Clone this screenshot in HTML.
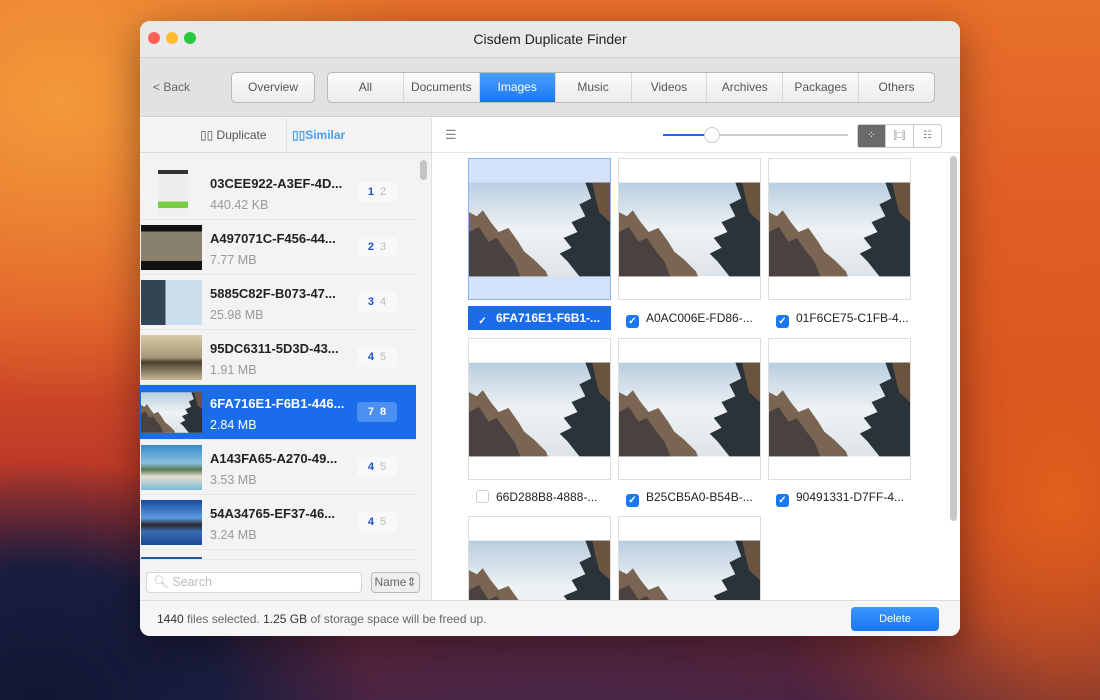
<!DOCTYPE html>
<html><head><meta charset="utf-8"><style>
*{box-sizing:border-box;margin:0;padding:0}
body{width:1100px;height:700px;overflow:hidden;position:relative;font-family:"Liberation Sans",sans-serif;
background:
radial-gradient(ellipse 330px 240px at 40px 700px,#121634 0%,#1a1d3e 55%,rgba(26,29,62,0) 100%),
radial-gradient(ellipse 520px 180px at 560px 720px,#4a2848 0%,rgba(74,40,72,0) 100%),
radial-gradient(ellipse 300px 400px at 1060px 500px,#e0601c 0%,rgba(224,96,28,0) 100%),
radial-gradient(ellipse 360px 300px at 60px 100px,#f39a3a 0%,rgba(243,154,58,0) 100%),
linear-gradient(180deg,#e8702a 0%,#dc5426 45%,#b03028 75%,#4a1e3a 100%);}
.win{position:absolute;left:140px;top:21px;width:820px;height:615px;background:#fff;border-radius:10px;overflow:hidden;box-shadow:0 10px 40px rgba(0,0,0,.4)}
.title{height:36px;background:#e9e9e9;text-align:center;font-size:14px;line-height:36px;color:#222;position:relative}
.dot{position:absolute;top:11px;width:12px;height:12px;border-radius:50%}
.tb{height:60px;background:#e2e2e2;border-top:1px solid #d2d2d2;border-bottom:1px solid #cfcfcf;position:relative}
.btn{position:absolute;top:14px;height:31px;border:1px solid #b9b9b9;border-radius:5px;background:linear-gradient(#fbfbfb,#ececec);font-size:12px;color:#555;text-align:center;line-height:29px}
.seg{position:absolute;left:187px;top:14px;width:608px;height:31px;border:1px solid #b9b9b9;border-radius:5px;background:linear-gradient(#fbfbfb,#ececec);display:flex;overflow:hidden}
.seg div{flex:1;text-align:center;font-size:12px;color:#555;line-height:29px;border-left:1px solid #d8d8d8}
.seg div:first-child{border-left:none}
.seg .on{background:linear-gradient(#4aa0ff,#1a78f0);color:#fff}
.left{position:absolute;left:0;top:97px;width:292px;height:482px;background:#f3f3f3;border-right:1px solid #e0e0e0}
.lh{height:35px;border-bottom:1px solid #ddd;font-size:12px;position:relative}
.row{position:absolute;left:0;width:276px;height:55px;border-bottom:1px solid #e6e6e6}
.row .th{position:absolute;left:1px;top:5px;width:61px;height:45px}
.row .n{position:absolute;left:70px;top:11px;font-size:13px;font-weight:bold;color:#222}
.row .s{position:absolute;left:70px;top:33px;font-size:12.5px;color:#999}
.row .b{position:absolute;left:217px;top:17px;width:40px;height:20px;border-radius:4px;background:#f8f8f8;font-size:11px;text-align:center;line-height:20px;font-weight:bold}
.row .b i{font-style:normal;color:#1a4fd0}.row .b u{text-decoration:none;color:#bbb;font-weight:normal;margin-left:6px}
.sel{background:#1a6cea}.sel .n,.sel .s{color:#fff}.sel .b{background:#4b8ff0}.sel .b i,.sel .b u{color:#fff;font-weight:bold}
.right{position:absolute;left:293px;top:97px;width:527px;height:482px;background:#fff}
.cell{position:absolute;width:143px;height:142px;border:1px solid #ddd;background:#fff}
.cell svg{position:absolute;left:0;top:23px;width:141px;height:95px}
.lab{position:absolute;width:143px;height:24px;font-size:12px;color:#222;line-height:24px}
.cb{display:inline-block;width:13px;height:13px;border-radius:3px;background:#1a78f0;vertical-align:-2px;margin:0 7px 0 8px;color:#fff;font-size:10px;line-height:13px;text-align:center;font-weight:bold}
.cb.off{background:#fff;border:1px solid #ccc}
.foot{position:absolute;left:0;top:579px;width:820px;height:36px;background:#f6f6f6;border-top:1px solid #ddd;font-size:12px;color:#666;line-height:36px;padding-left:17px}
.foot b{color:#333;font-weight:normal}
</style></head><body>
<svg width="0" height="0" style="position:absolute"><defs>
<linearGradient id="sky" x1="0" y1="0" x2="0" y2="1"><stop offset="0" stop-color="#b9cee0"/><stop offset=".5" stop-color="#eef2f4"/><stop offset="1" stop-color="#dde4e8"/></linearGradient>
<symbol id="ph" viewBox="0 0 143 95"><rect width="143" height="95" fill="url(#sky)"/>
<path d="M0 30 L8 34 L14 28 L22 40 L30 50 L40 46 L50 60 L56 70 L66 78 L78 90 L80 95 L0 95Z" fill="#7a6452"/>
<path d="M0 50 L10 45 L20 60 L28 56 L38 70 L46 80 L52 95 L0 95Z" fill="#4a4240"/>
<path d="M118 0 L143 0 L143 95 L112 95 L100 80 L92 72 L104 66 L96 56 L110 50 L104 40 L118 34 L112 22 L124 16Z" fill="#2a323a"/>
<path d="M125 0 L143 0 L143 40 L132 30 L128 14Z" fill="#6a5440"/></symbol>
</defs></svg>
<div class="win">
<div class="title"><span class="dot" style="left:8px;background:#fe5f57"></span><span class="dot" style="left:26px;background:#febc2e"></span><span class="dot" style="left:44px;background:#28c840"></span>Cisdem Duplicate Finder</div>
<div class="tb"><div style="position:absolute;left:13px;top:22px;font-size:12px;color:#666">&lt; Back</div>
<div class="btn" style="left:91px;width:84px">Overview</div>
<div class="seg"><div>All</div><div>Documents</div><div class="on">Images</div><div>Music</div><div>Videos</div><div>Archives</div><div>Packages</div><div>Others</div></div></div>
<div class="left">
<div class="lh"><span style="position:absolute;left:60px;top:10px;color:#555">▯▯ Duplicate</span><span style="position:absolute;left:146px;top:0;height:34px;border-left:1px solid #e2e2e2"></span><span style="position:absolute;left:152px;top:10px;color:#4a9ef0;font-weight:bold">▯▯Similar</span></div>
<div style="position:absolute;left:280px;top:42px;width:7px;height:20px;border-radius:4px;background:#c4c4c4"></div>
<div class="row" style="top:47px"><div class="th" style="left:18px;width:30px;background:linear-gradient(#333 0 4px,#eee 4px 70%,#7c4 70% 85%,#eee 85%)"></div><div class="n">03CEE922-A3EF-4D...</div><div class="s">440.42 KB</div><div class="b"><i>1</i><u>2</u></div></div>
<div class="row" style="top:102px"><div class="th" style="background:linear-gradient(#111 0 15%,#8a8070 15% 80%,#111 80%)"></div><div class="n">A497071C-F456-44...</div><div class="s">7.77 MB</div><div class="b"><i>2</i><u>3</u></div></div>
<div class="row" style="top:157px"><div class="th" style="background:linear-gradient(90deg,#345 0 40%,#cde 40%)"></div><div class="n">5885C82F-B073-47...</div><div class="s">25.98 MB</div><div class="b"><i>3</i><u>4</u></div></div>
<div class="row" style="top:212px"><div class="th" style="background:linear-gradient(#d8c8a8,#a89878 50%,#4a4030 60%,#c8b898)"></div><div class="n">95DC6311-5D3D-43...</div><div class="s">1.91 MB</div><div class="b"><i>4</i><u>5</u></div></div>
<div class="row sel" style="top:267px"><svg class="th" preserveAspectRatio="none"><use href="#ph"/></svg><div class="n">6FA716E1-F6B1-446...</div><div class="s">2.84 MB</div><div class="b"><i>7</i><u>8</u></div></div>
<div class="row" style="top:322px"><div class="th" style="background:linear-gradient(#3a8ac8,#8ac0e0 40%,#5a7a50 55%,#e8e0d0 70%,#7ab8d8)"></div><div class="n">A143FA65-A270-49...</div><div class="s">3.53 MB</div><div class="b"><i>4</i><u>5</u></div></div>
<div class="row" style="top:377px"><div class="th" style="background:linear-gradient(#1a4a9a,#5a9ae0 40%,#2a2a2a 55%,#3a6ab0 70%,#1a4a9a)"></div><div class="n">54A34765-EF37-46...</div><div class="s">3.24 MB</div><div class="b"><i>4</i><u>5</u></div></div>
<div class="row" style="top:432px;height:10px;overflow:hidden"><div class="th" style="top:7px;background:#2a5aa0"></div></div>
<div style="position:absolute;left:0;top:442px;width:291px;height:40px;background:#f3f3f3"></div>
<div style="position:absolute;left:6px;top:454px;width:216px;height:21px;border:1px solid #d6d6d6;border-radius:4px;background:#fff;font-size:12.5px;color:#bbb;line-height:19px;padding-left:6px">🔍︎ Search</div>
<div style="position:absolute;left:231px;top:454px;width:49px;height:21px;border:1px solid #bbb;border-radius:4px;background:#eee;font-size:12px;color:#666;line-height:19px;text-align:center">Name⇕</div>
</div>
<div class="right">
<div style="height:35px;border-bottom:1px solid #e6e6e6;position:relative">
<span style="position:absolute;left:12px;top:9px;font-size:13px;color:#888">☰</span>
<div style="position:absolute;left:230px;top:16px;width:50px;height:2px;background:#1a6cea"></div>
<div style="position:absolute;left:280px;top:16px;width:135px;height:2px;background:#ccc"></div>
<div style="position:absolute;left:271px;top:9px;width:16px;height:16px;border-radius:50%;background:#fff;border:1px solid #ccc"></div>
<div style="position:absolute;left:424px;top:6px;width:85px;height:24px;border:1px solid #ccc;border-radius:4px;display:flex;font-size:10px;color:#888;line-height:22px;text-align:center">
<div style="flex:1;background:#6a6a6a;color:#fff">⁘</div><div style="flex:1;border-left:1px solid #ccc">[□]</div><div style="flex:1;border-left:1px solid #ccc">☷</div></div></div>
<div style="position:absolute;left:517px;top:38px;width:7px;height:365px;border-radius:4px;background:#c8c8c8"></div>
<div class="cell" style="left:35px;top:40px;background:#d4e2fa;border-color:#8ab4ee"><svg preserveAspectRatio="none"><use href="#ph"/></svg></div>
<div class="cell" style="left:185px;top:40px"><svg preserveAspectRatio="none"><use href="#ph"/></svg></div>
<div class="cell" style="left:335px;top:40px"><svg preserveAspectRatio="none"><use href="#ph"/></svg></div>
<div class="lab" style="left:35px;top:188px;background:#1a6cea;color:#fff;font-weight:bold"><span class="cb" style="background:none">✓</span>6FA716E1-F6B1-...</div>
<div class="lab" style="left:185px;top:188px"><span class="cb">✓</span>A0AC006E-FD86-...</div>
<div class="lab" style="left:335px;top:188px"><span class="cb">✓</span>01F6CE75-C1FB-4...</div>
<div class="cell" style="left:35px;top:220px"><svg preserveAspectRatio="none"><use href="#ph"/></svg></div>
<div class="cell" style="left:185px;top:220px"><svg preserveAspectRatio="none"><use href="#ph"/></svg></div>
<div class="cell" style="left:335px;top:220px"><svg preserveAspectRatio="none"><use href="#ph"/></svg></div>
<div class="lab" style="left:35px;top:367px"><span class="cb off"></span>66D288B8-4888-...</div>
<div class="lab" style="left:185px;top:367px"><span class="cb">✓</span>B25CB5A0-B54B-...</div>
<div class="lab" style="left:335px;top:367px"><span class="cb">✓</span>90491331-D7FF-4...</div>
<div class="cell" style="left:35px;top:398px"><svg preserveAspectRatio="none"><use href="#ph"/></svg></div>
<div class="cell" style="left:185px;top:398px"><svg preserveAspectRatio="none"><use href="#ph"/></svg></div>
</div>
<div class="foot"><b>1440</b> files selected. <b>1.25 GB</b> of storage space will be freed up.
<div style="position:absolute;left:711px;top:6px;width:88px;height:24px;border-radius:4px;background:linear-gradient(#3a96ff,#1a78f0);color:#fff;font-size:11px;text-align:center;line-height:24px">Delete</div></div>
</div>
</body></html>
